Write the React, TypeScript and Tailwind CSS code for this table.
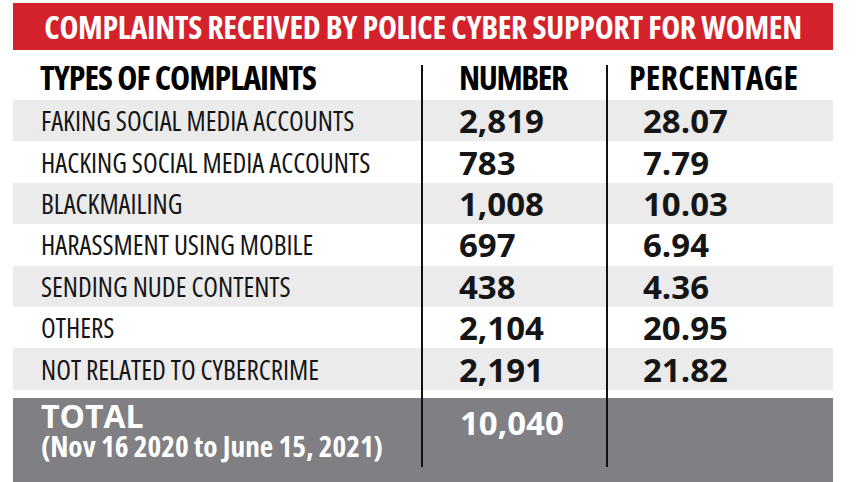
const rows = [
  { label: 'FAKING SOCIAL MEDIA ACCOUNTS', number: '2,819', pct: '28.07' },
  { label: 'HACKING SOCIAL MEDIA ACCOUNTS', number: '783', pct: '7.79' },
  { label: 'BLACKMAILING', number: '1,008', pct: '10.03' },
  { label: 'HARASSMENT USING MOBILE', number: '697', pct: '6.94' },
  { label: 'SENDING NUDE CONTENTS', number: '438', pct: '4.36' },
  { label: 'OTHERS', number: '2,104', pct: '20.95' },
  { label: 'NOT RELATED TO CYBERCRIME', number: '2,191', pct: '21.82' },
];

export default function App() {
  return (
    <div className="w-[857px] h-[482px] bg-white overflow-hidden font-['Open_Sans',sans-serif] text-[#151515]">
      <div className="relative w-[820px] ml-[13px] pt-[3px]">
        {/* red banner */}
        <div className="h-[47px] bg-[#d3222b] flex items-center justify-center">
          <h1 className="text-[32px] font-bold font-stretch-condensed text-white tracking-[-0.32px] leading-none">
            COMPLAINTS RECEIVED BY POLICE CYBER SUPPORT FOR WOMEN
          </h1>
        </div>

        {/* header */}
        <div className="grid grid-cols-[409px_185px_226px] h-[50px] items-center font-bold font-stretch-condensed text-[34px] leading-none text-black pt-[4px]">
          <div className="pl-[27px] tracking-[-0.95px]">TYPES OF COMPLAINTS</div>
          <div className="pl-[37px] tracking-[-1.4px]">NUMBER</div>
          <div className="pl-[22px] tracking-[0.2px]">PERCENTAGE</div>
        </div>

        {/* rows */}
        <div className="flex flex-col">
          {rows.map((row, i) => (
            <div
              key={i}
              className={`grid grid-cols-[409px_185px_226px] h-[41.4px] items-center ${i % 2 === 0 ? 'bg-[#ebebeb]' : 'bg-white'}`}
            >
              <div className="pl-[28px] text-[27px] font-stretch-condensed leading-none">{row.label}</div>
              <div className="pl-[37px] text-[33px] font-bold leading-none">{row.number}</div>
              <div className="pl-[36px] text-[33px] font-bold leading-none">{row.pct}</div>
            </div>
          ))}
        </div>

        {/* total */}
        <div className="grid grid-cols-[409px_185px_226px] h-[84px] mt-[8px] bg-[#807f84] text-white">
          <div className="pl-[28px] pt-[3px] flex flex-col">
            <span className="text-[32px] font-bold leading-[30px]">TOTAL</span>
            <span className="text-[29.3px] font-bold font-stretch-condensed leading-[30px]">
              (Nov 16 2020 to June 15, 2021)
            </span>
          </div>
          <div className="pl-[38px] pt-[5px] text-[33px] font-bold leading-[40px]">10,040</div>
          <div />
        </div>

        {/* column rules */}
        <div className="absolute left-[408px] top-[65px] w-[2px] h-[402px] bg-[#111]" />
        <div className="absolute left-[593px] top-[65px] w-[2px] h-[402px] bg-[#111]" />
      </div>
    </div>
  );
}
